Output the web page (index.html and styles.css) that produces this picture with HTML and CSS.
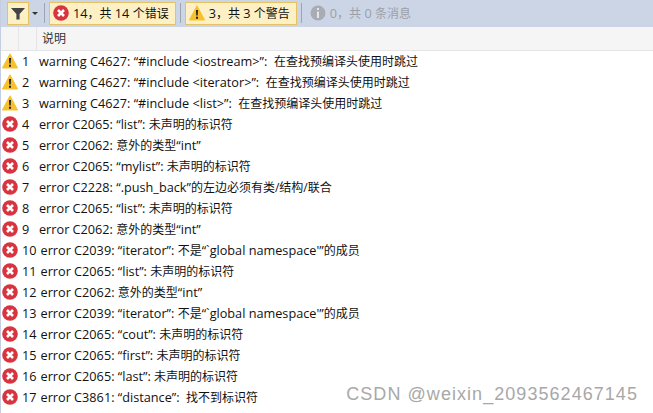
FILE: index.html
```html
<!DOCTYPE html>
<html lang="zh">
<head>
<meta charset="utf-8">
<title>错误列表</title>
<link rel="stylesheet" href="styles.css">
</head>
<body>
<svg class="defs" width="0" height="0">
  <symbol id="err" viewBox="0 0 16 16">
    <circle cx="8" cy="8" r="7.8" fill="#d8343f"/>
    <path d="M5 5l6 6M11 5l-6 6" stroke="#fff" stroke-width="2.6" fill="none"/>
  </symbol>
  <symbol id="warn" viewBox="0 0 16 16">
    <path d="M8 .8 15.6 15H.4z" fill="#f7c12e" stroke="#f7c12e" stroke-linejoin="round"/>
    <path d="M7 5h2l-.3 5.6H7.3zM7 11.8h2v2H7z" fill="#1e1e1e"/>
  </symbol>
</svg>
<div class="panel">
  <div class="toolbar">
    <span class="filter"><svg width="14" height="13" viewBox="0 0 14 13"><path d="M0 1h14L8.600 7v5.500H5.400V7z" fill="#444"/></svg></span>
    <span class="caret"></span>
    <span class="sep"></span>
    <span class="tbtn on"><svg class="ic15"><use href="#err"/></svg><span>14<i>，共</i> 14 <i>个错误</i></span></span>
    <span class="sep"></span>
    <span class="tbtn on"><svg class="ic15"><use href="#warn"/></svg><span>3<i>，共</i> 3 <i>个警告</i></span></span>
    <span class="sep"></span>
    <span class="tbtn off"><svg class="ic15" viewBox="0 0 16 16"><circle cx="8" cy="8" r="7.500" fill="#a9adb3"/><path d="M7 3h2v2H7zM7 6.500h2V13H7z" fill="#e4e6ea"/></svg><span>0<i>，共</i> 0 <i>条消息</i></span></span>
  </div>
  <div class="head"><span class="hc1"></span><span class="hc2"></span><span class="hc3"><i>说明</i></span></div>
  <div class="rows">
    <div class="row"><svg class="ic"><use href="#warn"/></svg><span class="n">1</span><span>warning C4627: “#include &lt;iostream&gt;”:  <i>在查找预编译头使用时跳过</i></span></div>
    <div class="row"><svg class="ic"><use href="#warn"/></svg><span class="n">2</span><span>warning C4627: “#include &lt;iterator&gt;”:  <i>在查找预编译头使用时跳过</i></span></div>
    <div class="row"><svg class="ic"><use href="#warn"/></svg><span class="n">3</span><span>warning C4627: “#include &lt;list&gt;”:  <i>在查找预编译头使用时跳过</i></span></div>
    <div class="row"><svg class="ic"><use href="#err"/></svg><span class="n">4</span><span>error C2065: “list”: <i>未声明的标识符</i></span></div>
    <div class="row"><svg class="ic"><use href="#err"/></svg><span class="n">5</span><span>error C2062: <i>意外的类型</i>“int”</span></div>
    <div class="row"><svg class="ic"><use href="#err"/></svg><span class="n">6</span><span>error C2065: “mylist”: <i>未声明的标识符</i></span></div>
    <div class="row"><svg class="ic"><use href="#err"/></svg><span class="n">7</span><span>error C2228: “.push_back”<i>的左边必须有类/结构/联合</i></span></div>
    <div class="row"><svg class="ic"><use href="#err"/></svg><span class="n">8</span><span>error C2065: “list”: <i>未声明的标识符</i></span></div>
    <div class="row"><svg class="ic"><use href="#err"/></svg><span class="n">9</span><span>error C2062: <i>意外的类型</i>“int”</span></div>
    <div class="row"><svg class="ic"><use href="#err"/></svg><span class="n">10</span><span>error C2039: “iterator”: <i>不是</i>“`global namespace'”<i>的成员</i></span></div>
    <div class="row"><svg class="ic"><use href="#err"/></svg><span class="n">11</span><span>error C2065: “list”: <i>未声明的标识符</i></span></div>
    <div class="row"><svg class="ic"><use href="#err"/></svg><span class="n">12</span><span>error C2062: <i>意外的类型</i>“int”</span></div>
    <div class="row"><svg class="ic"><use href="#err"/></svg><span class="n">13</span><span>error C2039: “iterator”: <i>不是</i>“`global namespace'”<i>的成员</i></span></div>
    <div class="row"><svg class="ic"><use href="#err"/></svg><span class="n">14</span><span>error C2065: “cout”: <i>未声明的标识符</i></span></div>
    <div class="row"><svg class="ic"><use href="#err"/></svg><span class="n">15</span><span>error C2065: “first”: <i>未声明的标识符</i></span></div>
    <div class="row"><svg class="ic"><use href="#err"/></svg><span class="n">16</span><span>error C2065: “last”: <i>未声明的标识符</i></span></div>
    <div class="row"><svg class="ic"><use href="#err"/></svg><span class="n">17</span><span>error C3861: “distance”:  <i>找不到标识符</i></span></div>
  </div>
  <div class="mark">CSDN @weixin_2093562467145</div>
</div>
</body>
</html>
```
FILE: styles.css
```css
html, body { margin: 0; padding: 0; }
body {
  width: 653px; height: 413px; overflow: hidden; background: #fff;
  font-family: "Open Sans", "Noto Sans CJK SC", sans-serif;
  font-size: 12.7px; color: #111;
}
i { font-style: normal; font-size: 12px; }
.defs { position: absolute; }
.panel { position: relative; height: 413px; border-left: 1px solid #c5cde0; box-sizing: border-box; }
.toolbar {
  height: 27px; background: #ccd5e6; display: flex; align-items: center;
  box-sizing: border-box; padding: 0 0 1px 6px;
}
.filter {
  width: 20px; height: 21px; background: #fdf0c4; border: 1px solid #e5c365;
  display: flex; align-items: center; justify-content: center;
}
.caret {
  width: 0; height: 0; border: 3px solid transparent; border-top: 3px solid #333; border-bottom: 0;
  margin: 1px 2px 0 3px;
}
.sep { width: 1px; height: 20px; background: #9da5b4; margin: 0 4px; }
.tbtn {
  display: flex; align-items: center; gap: 4px; height: 23px; box-sizing: border-box;
  padding: 0 6px 0 3px; white-space: pre;
}
.on { background: #fdf0c4; border: 1px solid #e5c365; }
.off { color: #9aa0a8; border: 1px solid transparent; }
.ic15 { width: 16px; height: 16px; }
.head { height: 23px; background: #f5f5f5; display: flex; border-bottom: 1px solid #e5e5e5; color: #333; }
.hc1 { width: 17px; border-right: 1px solid #e5e5e5; }
.hc2 { width: 17px; border-right: 1px solid #e5e5e5; }
.hc3 { padding: 2px 0 0 5px; }
.rows { margin-top: -1px; }
.row { height: 21px; display: flex; align-items: center; white-space: pre; }
.ic { width: 16px; height: 16px; margin: 0 4px 0 1px; flex: none; }
.n { margin-right: 4px; min-width: 13px; }
.mark {
  position: absolute; right: 15px; bottom: 8px; font-size: 18px; color: #a8a8a8;
  font-family: "Liberation Sans", sans-serif; letter-spacing: 1.05px;
}
```
